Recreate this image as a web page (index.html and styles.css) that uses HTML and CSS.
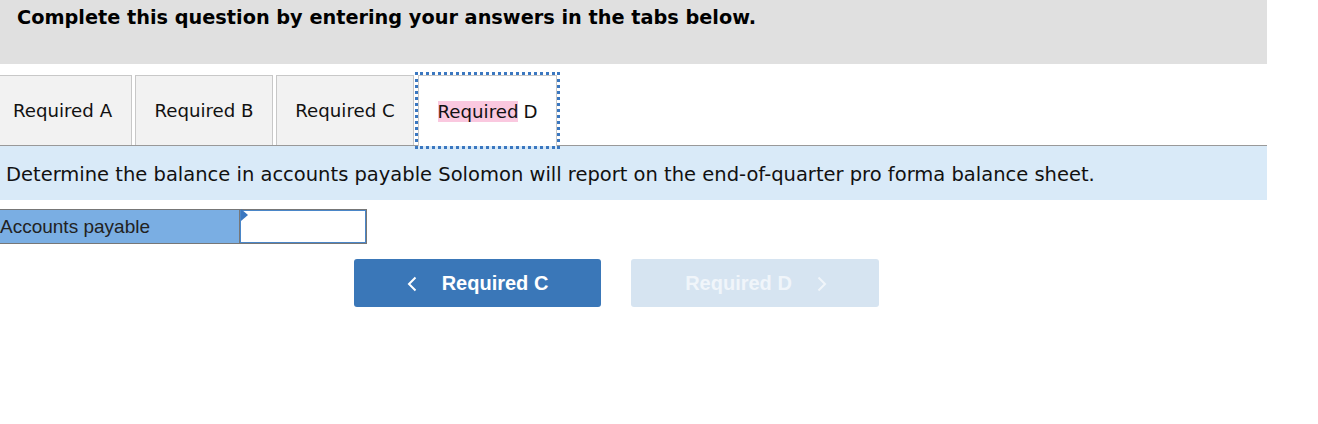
FILE: index.html
```html
<!DOCTYPE html>
<html>
<head>
<meta charset="utf-8">
<link rel="stylesheet" href="styles.css">
</head>
<body>
<div class="wrap">
  <div class="header">Complete this question by entering your answers in the tabs below.</div>
  <div class="tabs">
    <div class="tab tab-a">Required A</div>
    <div class="tab">Required B</div>
    <div class="tab">Required C</div>
    <div class="tab active"><span class="hl">Required</span> D</div>
  </div>
  <div class="instr">Determine the balance in accounts payable Solomon will report on the end-of-quarter pro forma balance sheet.</div>
  <div class="row">
    <div class="label">Accounts payable</div>
    <div class="cell"><span class="flag"></span></div>
  </div>
  <div class="nav">
    <div class="btn prev"><svg class="chev" width="10" height="16" viewBox="0 0 10 16"><path d="M8.5 1.5 L2 8 L8.5 14.5" fill="none" stroke="currentColor" stroke-width="2"/></svg><span>Required C</span></div>
    <div class="btn next"><span>Required D</span><svg class="chev" width="10" height="16" viewBox="0 0 10 16"><path d="M1.5 1.5 L8 8 L1.5 14.5" fill="none" stroke="currentColor" stroke-width="2"/></svg></div>
  </div>
</div>
</body>
</html>
```
FILE: styles.css
```css
html, body {
  margin: 0;
  padding: 0;
  background: #ffffff;
}
.wrap {
  width: 1267px;
  font-family: "DejaVu Sans", Verdana, sans-serif;
  color: #111;
}
.header {
  background: #e0e0e0;
  height: 64px;
  box-sizing: border-box;
  padding: 6px 0 0 17px;
  font-weight: bold;
  font-size: 19.3px;
  color: #000;
}
.tabs {
  display: flex;
  align-items: flex-end;
  gap: 3px;
  margin-top: 11px;
  border-bottom: 1px solid #999;
  height: 70px;
}
.tab {
  box-sizing: border-box;
  height: 70px;
  width: 138px;
  background: #f2f2f2;
  border: 1px solid #c8c8c8;
  border-bottom: none;
  display: flex;
  align-items: center;
  justify-content: center;
  font-size: 18.2px;
  color: #111;
}
.tab-a {
  width: 139px;
  margin-left: -7px;
}
.tab.active {
  background: #fff;
  width: 139px;
  margin-left: 1px;
  height: 71px;
  margin-bottom: -1px;
  outline: 3px dotted #3a77c0;
}
.hl {
  background: #fac8df;
  margin-right: 5px;
}
.instr {
  background: #d9eaf8;
  height: 54px;
  box-sizing: border-box;
  padding-left: 6px;
  padding-top: 2px;
  display: flex;
  align-items: center;
  font-size: 19.5px;
  color: #111;
}
.row {
  display: flex;
  margin-top: 9px;
  margin-left: -7px;
  height: 35px;
}
.label {
  box-sizing: border-box;
  width: 246px;
  background: #7aaee3;
  border: 1px solid #777;
  border-right: none;
  font-family: "Liberation Sans", Arial, sans-serif;
  font-size: 19px;
  color: #222;
  display: flex;
  align-items: center;
  padding-left: 6px;
}
.cell {
  box-sizing: border-box;
  width: 128px;
  border: 1px solid #777;
  position: relative;
  background: #fff;
}
.cell::before {
  content: "";
  position: absolute;
  inset: 0;
  border: 1px solid #4a86c8;
}
.flag {
  position: absolute;
  left: 1px;
  top: -1px;
  width: 0;
  height: 0;
  border-top: 6px solid transparent;
  border-bottom: 6px solid transparent;
  border-left: 7px solid #3a77c0;
}
.nav {
  display: flex;
  gap: 30px;
  margin-top: 15px;
  margin-left: 354px;
}
.btn {
  box-sizing: border-box;
  width: 247px;
  height: 48px;
  border-radius: 3px;
  display: flex;
  align-items: center;
  justify-content: center;
  gap: 25px;
  font-family: "Liberation Sans", Arial, sans-serif;
  font-weight: bold;
  font-size: 20px;
  color: #fff;
}
.prev {
  background: #3a77b8;
}
.next {
  background: #d6e4f1;
  color: #f0f5fa;
  width: 248px;
  padding-left: 2px;
}
.chev {
  display: block;
  margin-top: 1px;
}
```
